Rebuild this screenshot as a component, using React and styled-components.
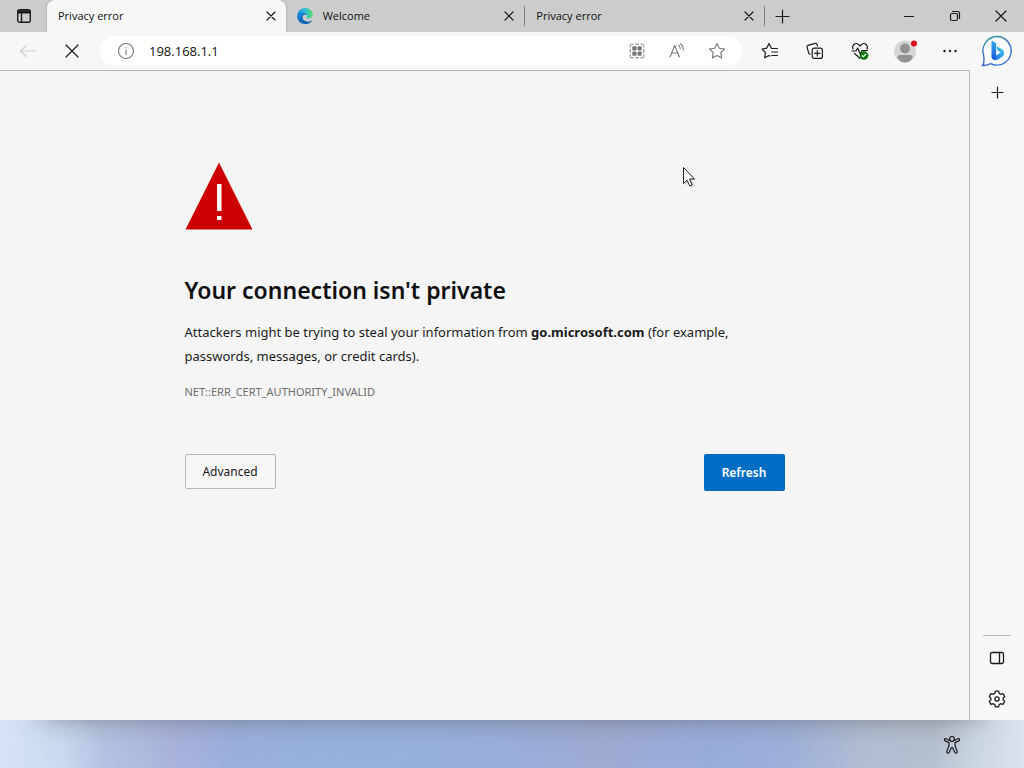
import React from 'react';
import styled, { createGlobalStyle } from 'styled-components';

const GlobalStyle = createGlobalStyle`
  * {
    box-sizing: border-box;
  }
  body {
    margin: 0;
    background: #f5f5f5;
    color: #101010;
    font-family: "Open Sans", "Noto Sans", sans-serif;
  }
  button, input {
    font-family: inherit;
    color: inherit;
  }
`;

const Desktop = styled.div`
  min-height: 100vh;
  display: flex;
  flex-direction: column;
`;

const TabStrip = styled.header`
  display: flex;
  height: 32px;
  background: #cccccc;
`;

const IconButton = styled.button`
  display: flex;
  flex: none;
  align-items: center;
  justify-content: center;
  width: ${props => props.$width || 38}px;
  height: ${props => props.$height || 30}px;
  padding: 0;
  border: 0;
  background: transparent;
  color: ${props => props.$color || '#1b1b1b'};
`;

const Tabs = styled.div`
  display: flex;
  flex: 0 1 718px;
  min-width: 0;
`;

const Tab = styled.div`
  display: flex;
  flex: 1;
  min-width: 0;
  align-items: center;
  height: 32px;
  padding-left: 11px;
  border-radius: ${props => (props.$active ? '8px 8px 0 0' : '0')};
  background: ${props => (props.$active ? '#f7f7f7' : 'transparent')};
  box-shadow: ${props => (props.$active ? '0 0 3px #a0a0a0' : 'none')};
`;

const TabDivider = styled.span`
  flex: none;
  width: 1px;
  height: 20px;
  margin-top: 6px;
  background: #808080;
`;

const TabTitle = styled.button`
  display: flex;
  flex: 1;
  align-items: center;
  gap: 10px;
  min-width: 0;
  height: 32px;
  padding: 0;
  border: 0;
  background: transparent;
  font-size: 11px;
  line-height: 16px;
  text-align: left;
  white-space: nowrap;
`;

const WindowControls = styled.div`
  display: flex;
  margin-left: auto;
`;

const Browser = styled.div`
  position: relative;
  z-index: 1;
  display: flex;
  flex: 1;
  box-shadow: 0 38px 28px -42px rgba(90, 90, 90, 0.7);
`;

const MainColumn = styled.div`
  display: flex;
  flex: 1;
  flex-direction: column;
  min-width: 0;
`;

const Toolbar = styled.div`
  display: flex;
  align-items: center;
  height: 39px;
  padding: 0 1px 0 6px;
  border-bottom: 1px solid #b8b8b8;
  background: #f7f7f7;
`;

const AddressBar = styled.form`
  display: flex;
  flex: 1;
  align-items: center;
  min-width: 0;
  height: 30px;
  margin: 0 9px 0 12px;
  padding: 0 5px 0 7px;
  border-radius: 15px;
  background: #ffffff;
`;

const AddressInput = styled.input`
  flex: 1;
  min-width: 0;
  height: 24px;
  padding: 0 4px;
  border: 0;
  outline: 0;
  background: transparent;
  font-size: 13px;
`;

const ToolbarActions = styled.div`
  display: flex;
  gap: 7px;
`;

const NavActions = styled.div`
  display: flex;
  gap: 6px;
`;

const Page = styled.main`
  flex: 1;
  padding: 91px 24px 24px;
  border-right: 1px solid #b8b8b8;
  background: #f5f5f5;
  font-family: "Noto Sans", "Open Sans", sans-serif;
`;

const ErrorContent = styled.div`
  max-width: 600px;
  margin: 0 auto;
`;

const WarningIcon = styled.svg`
  display: block;
  width: 68px;
  height: 68px;
`;

const Heading = styled.h1`
  margin: 44px 0 14px;
  font-size: 23px;
  font-weight: 600;
  line-height: 32px;
`;

const Message = styled.p`
  margin: 0;
  font-size: 13px;
  line-height: 24px;
  color: #1b1b1b;
`;

const ErrorCode = styled.div`
  margin-top: 12px;
  font-size: 11px;
  line-height: 24px;
  color: #6e6e6e;
`;

const ButtonRow = styled.div`
  display: flex;
  align-items: flex-start;
  justify-content: space-between;
  margin-top: 50px;
`;

const PageButton = styled.button`
  height: ${props => (props.$primary ? 37 : 35)}px;
  width: ${props => (props.$primary ? 81 : 91)}px;
  padding: 0;
  border: ${props => (props.$primary ? '0' : '1px solid #b8b8b8')};
  border-radius: 2px;
  background: ${props => (props.$primary ? '#006cc4' : '#f7f7f7')};
  color: ${props => (props.$primary ? '#ffffff' : '#1b1b1b')};
  font-size: 12px;
  font-weight: ${props => (props.$primary ? 600 : 400)};
`;

const Sidebar = styled.aside`
  display: flex;
  flex: none;
  flex-direction: column;
  align-items: center;
  width: 54px;
  padding: 2px 0 1px;
  background: #f7f7f7;
`;

const SidebarBottom = styled.div`
  display: flex;
  flex-direction: column;
  align-items: center;
  margin-top: auto;
  padding-top: 2px;
  border-top: 1px solid #b8b8b8;
`;

const Taskbar = styled.footer`
  display: flex;
  align-items: center;
  justify-content: flex-end;
  height: 48px;
  padding: 2px 53px 0 0;
  background: linear-gradient(
    90deg,
    #d6e3f3 0%,
    #cbdaf1 6%,
    #b5c4e1 10%,
    #a9b3dc 17%,
    #9bb0dd 23%,
    #98b2df 33%,
    #99afdc 48%,
    #9eabd2 59%,
    #98acdc 69%,
    #9eb1da 77%,
    #b4bed1 85%,
    #b6bfce 91%,
    #cbd5e1 95%,
    #dae3ee 100%
  );
`;

const TaskbarButton = styled(IconButton)`
  position: relative;
  z-index: 2;
`;

const MousePointer = styled.svg`
  position: fixed;
  z-index: 3;
  top: 166px;
  left: 682px;
  width: 15px;
  height: 23px;
  pointer-events: none;
`;

const Icon = ({ size = 16, stroke = 1, children }) => (
  <svg
    width={size}
    height={size}
    viewBox={`0 0 ${size} ${size}`}
    fill="none"
    stroke="currentColor"
    strokeWidth={stroke}
    strokeLinecap="round"
    strokeLinejoin="round"
    aria-hidden="true"
  >
    {children}
  </svg>
);

const CloseIcon = ({ size = 10 }) => (
  <Icon size={size} stroke={1.2}>
    <path d={`M1 1L${size - 1} ${size - 1}M${size - 1} 1L1 ${size - 1}`} />
  </Icon>
);

const PlusIcon = ({ size = 15 }) => (
  <Icon size={size} stroke={1.2}>
    <path d={`M${size / 2} 1V${size - 1}M1 ${size / 2}H${size - 1}`} />
  </Icon>
);

const TabActionsIcon = () => (
  <Icon stroke={1.4}>
    <rect x="1.7" y="1.7" width="12.6" height="12.6" rx="2" />
    <path d="M2 3.2H14M2 4.7H14" stroke="currentColor" strokeWidth="1.8" />
    <path d="M5.5 5V14" />
  </Icon>
);

const EdgeLogo = () => (
  <svg width="16" height="16" viewBox="0 0 16 16" aria-hidden="true">
    <defs>
      <linearGradient id="edgeTop" x1="0" y1="0.4" x2="1" y2="0.4">
        <stop offset="0" stopColor="#1c8fdc" />
        <stop offset="0.5" stopColor="#2cbfd2" />
        <stop offset="1" stopColor="#5fdb70" />
      </linearGradient>
      <linearGradient id="edgeBase" x1="0" y1="0" x2="1" y2="1">
        <stop offset="0" stopColor="#1a8fe0" />
        <stop offset="1" stopColor="#0c4f9c" />
      </linearGradient>
    </defs>
    <path d="M0.2 7.4C0.8 3 4 0.1 8.2 0.1c4.5 0 7.7 3.1 7.7 6.5 0 2.5-1.8 4-4.2 4-2 0-2.6-.7-2.2-1.4.8-1.4.4-4.7-3.5-4.7-3 0-5 1.3-5.8 2.9Z" fill="url(#edgeTop)" />
    <path d="M0.1 8c.3-2.4 3-4 5.7-3.8 2.8.2 4 1.9 4.1 3.1-.7-.8-3.8-.7-4.5 1.7-.7 3 2.7 5.4 5.9 4.9 1.4-.2 2.4-.7 3.1-1.1.3-.1.5.1.3.4A8 8 0 0 1 8 16C3.5 16 .1 12.6.1 8Z" fill="url(#edgeBase)" />
    <path d="M5.3 8.1c-1.7 3.1.4 6.8 4.1 7.6 2.3-.3 4.2-1.3 5.3-2.7-3.5 1.7-9.9.4-9.4-4.9Z" fill="#1267b5" />
  </svg>
);

const StarIcon = () => (
  <Icon size={18} stroke={1.1}>
    <path d="M9 1.5L11.3 6.2L16.5 7L12.8 10.7L13.6 15.9L9 13.5L4.4 15.9L5.2 10.7L1.5 7L6.7 6.2Z" />
  </Icon>
);

const QrIcon = () => (
  <Icon size={16}>
    <path d="M4 1.2H2.4Q1.2 1.2 1.2 2.4V4M12 1.2H13.6Q14.8 1.2 14.8 2.4V4M4 14.8H2.4Q1.2 14.8 1.2 13.6V12M12 14.8H13.6Q14.8 14.8 14.8 13.6V12M6.5 1.2H9.5M6.5 14.8H9.5M1.2 6.5V9.5M14.8 6.5V9.5" />
    <g fill="currentColor" stroke="none">
      <rect x="3.3" y="3.3" width="4.2" height="4.2" rx="1" />
      <rect x="8.5" y="3.3" width="4.2" height="4.2" rx="1" />
      <rect x="3.3" y="8.5" width="4.2" height="4.2" rx="1" />
      <rect x="8.5" y="8.5" width="4.2" height="4.2" rx="1" />
    </g>
  </Icon>
);

const ReadAloudIcon = () => (
  <Icon size={18} stroke={1.1}>
    <path d="M2 15L6.7 3.5L11.4 15M3.6 11H9.8M10.7 3.3Q12.3 4.7 12.2 6.7M12.5 1.8Q15.6 4.2 15.2 8" />
  </Icon>
);

const FavoritesIcon = () => (
  <Icon size={18} stroke={1.2}>
    <path d="M10.3 6L8 1.6L5.7 6.2L1 7L4.4 10.5L3.7 15.8L8 13.4L9 14M10.8 6.5H16.5M10.8 10H16.5M10.8 13.5H16.5" />
  </Icon>
);

const CollectionsIcon = () => (
  <Icon size={18} stroke={1.2}>
    <rect x="6.2" y="6.2" width="10.2" height="10.2" rx="2" />
    <path d="M11.3 8.6V14M8.6 11.3H14M4 12.1Q3 12 2.6 10.800L1.100 5Q.8 3.700 2 3.300L9.200 1.300Q10.500 1 11 2.300L11.500 4" />
  </Icon>
);

const EssentialsIcon = () => (
  <Icon size={18} stroke={1.2}>
    <path d="M2 7C.6 3.5 4-.1 7.4 2.4L9 4L10.6 2.4C14-.1 17.4 3.5 16 7M1 9H5L6.7 6L9.2 12L11 8.5H16.5M3.5 11.5L9 16.3" />
    <circle cx="13" cy="13.4" r="4" fill="#107c10" stroke="#0b6a0b" strokeWidth="0.6" />
    <path d="M11.4 13.7L12.5 14.7L14.8 12.2" stroke="#ffffff" />
  </Icon>
);

const ProfileIcon = () => (
  <svg width="24" height="24" viewBox="0 0 24 24" aria-hidden="true">
    <circle cx="12" cy="12.5" r="11" fill="#d6d6d6" />
    <circle cx="12" cy="9.5" r="5" fill="#929292" />
    <path d="M4.5 18.5Q4.5 16 7 16H17Q19.5 16 19.5 18.5Q17 23.5 12 23.5Q7 23.5 4.5 18.5Z" fill="#929292" />
    <circle cx="21" cy="4.5" r="3" fill="#e00b1c" />
  </svg>
);

const BingIcon = () => (
  <svg width="32" height="32" viewBox="0 0 32 32" aria-hidden="true">
    <defs>
      <linearGradient id="bingBubble" x1="0.2" y1="0" x2="0.8" y2="1">
        <stop offset="0" stopColor="#2a9a9c" />
        <stop offset="0.5" stopColor="#3b64bd" />
        <stop offset="1" stopColor="#3378e8" />
      </linearGradient>
      <linearGradient id="bingBar" x1="0" y1="0" x2="0" y2="1">
        <stop offset="0" stopColor="#32a8f0" />
        <stop offset="1" stopColor="#1559d8" />
      </linearGradient>
      <linearGradient id="bingBowl" x1="1" y1="0" x2="0" y2="1">
        <stop offset="0" stopColor="#42d2ee" />
        <stop offset="1" stopColor="#1a66e8" />
      </linearGradient>
    </defs>
    <path d="M16.5 1.5A14.3 14.3 0 1 1 9.5 28.6Q5.5 30.7 1.6 30.5Q3.600 28 2.7 20.5A14.3 14.3 0 0 1 16.5 1.5Z" fill="#fbfdff" stroke="url(#bingBubble)" strokeWidth="1.4" />
    <path d="M16.2 11.600Q15.300 11.600 15.800 12.900L17 15.900L20 17.300L12.400 22.200Q11.800 24.900 14.700 25.100Q16 25 17.200 24.200L21.600 21.500Q23.400 20 23.200 17.600Q22.900 15.100 20.700 13.900Z" fill="url(#bingBowl)" />
    <path d="M10.500 6.500Q10.500 5.600 11.400 6L14.300 7.700Q15.200 8.300 15.200 9.500V20.200L14.400 24.800Q10.500 24.900 10.500 21.700Z" fill="url(#bingBar)" />
  </svg>
);

const SidePanelIcon = () => (
  <Icon stroke={1.3}>
    <rect x="1.5" y="2.5" width="13" height="11" rx="1.8" />
    <path d="M10.5 2.5V13.5" />
  </Icon>
);

const SettingsIcon = () => (
  <Icon size={18} stroke={1.3}>
    <path d="M7.4 1.2H10.6L11.2 3.4L12.8 4.3L15 3.7L16.7 6.5L15.1 8.1V9.9L16.7 11.5L15 14.3L12.8 13.7L11.2 14.6L10.6 16.8H7.4L6.8 14.6L5.2 13.7L3 14.3L1.3 11.5L2.9 9.9V8.1L1.3 6.5L3 3.7L5.2 4.3L6.8 3.4Z" />
    <circle cx="9" cy="9" r="2.1" />
  </Icon>
);

const AccessibilityIcon = () => (
  <Icon size={20} stroke={1.2}>
    <circle cx="10" cy="3.9" r="2.4" />
    <path d="M7.8 5.5L4 3.7Q2.6 3.4 2.4 4.6Q2.3 5.5 3.2 5.9L7 7.6V10.5L4.8 16.6Q4.7 18 5.8 18.2Q6.8 18.3 7.1 17.4L9.5 12.5H10.5L12.9 17.4Q13.2 18.3 14.2 18.2Q15.3 18 15.2 16.6L13 10.5V7.6L16.8 5.9Q17.7 5.5 17.6 4.6Q17.4 3.4 16 3.7L12.2 5.5" />
  </Icon>
);

const BrowserTab = ({ title, icon, active }) => (
  <Tab $active={active}>
    <TabTitle type="button" aria-current={active ? 'page' : undefined}>
      {icon}
      {title}
    </TabTitle>
    <IconButton $width={30} type="button" aria-label={`Close ${title}`}>
      <CloseIcon />
    </IconButton>
  </Tab>
);

const TitleBar = () => (
  <TabStrip>
    <IconButton $width={47} $height={32} type="button" aria-label="Tab actions">
      <TabActionsIcon />
    </IconButton>
    <Tabs>
      <BrowserTab title="Privacy error" active />
      <BrowserTab title="Welcome" icon={<EdgeLogo />} />
      <TabDivider />
      <BrowserTab title="Privacy error" />
      <TabDivider />
    </Tabs>
    <IconButton $width={35} $height={32} type="button" aria-label="New tab">
      <PlusIcon />
    </IconButton>
    <WindowControls>
      <IconButton $width={46} $height={32} type="button" aria-label="Minimize">
        <Icon size={10} stroke={1.2}>
          <path d="M0 5.5H10" />
        </Icon>
      </IconButton>
      <IconButton $width={46} $height={32} type="button" aria-label="Restore">
        <Icon size={12} stroke={1.2}>
          <rect x="1.5" y="3.5" width="7" height="7" rx="1.5" />
          <path d="M3.5 1.5H8.5Q10.5 1.5 10.5 3.5V8.5" />
        </Icon>
      </IconButton>
      <IconButton $width={46} $height={32} type="button" aria-label="Close window">
        <CloseIcon size={12} />
      </IconButton>
    </WindowControls>
  </TabStrip>
);

const NavigationBar = () => (
  <Toolbar>
    <NavActions>
      <IconButton $width={44} $color="#cfcfcf" type="button" aria-label="Back" disabled>
        <Icon size={18} stroke={1.2}>
          <path d="M16.5 9H1.5M7 3.5L1.5 9L7 14.5" />
        </Icon>
      </IconButton>
      <IconButton $width={32} type="button" aria-label="Stop">
        <CloseIcon size={14} />
      </IconButton>
    </NavActions>
    <AddressBar>
      <IconButton $color="#767676" type="button" aria-label="View site information">
        <Icon size={18} stroke={1.1}>
          <circle cx="9" cy="9" r="7.5" />
          <path d="M9 8V12.5M9 5.6V5.8" />
        </Icon>
      </IconButton>
      <AddressInput aria-label="Address" defaultValue="198.168.1.1" />
      <IconButton $width={40} $color="#767676" type="button" aria-label="Open app scan">
        <QrIcon />
      </IconButton>
      <IconButton $width={40} $color="#767676" type="button" aria-label="Read aloud">
        <ReadAloudIcon />
      </IconButton>
      <IconButton $width={40} $color="#767676" type="button" aria-label="Add to favorites">
        <StarIcon />
      </IconButton>
    </AddressBar>
    <ToolbarActions>
      <IconButton type="button" aria-label="Favorites">
        <FavoritesIcon />
      </IconButton>
      <IconButton type="button" aria-label="Collections">
        <CollectionsIcon />
      </IconButton>
      <IconButton type="button" aria-label="Browser essentials">
        <EssentialsIcon />
      </IconButton>
      <IconButton type="button" aria-label="Profile">
        <ProfileIcon />
      </IconButton>
      <IconButton type="button" aria-label="More">
        <Icon>
          <g fill="currentColor" stroke="none">
            <circle cx="2.5" cy="8" r="1.2" />
            <circle cx="8" cy="8" r="1.2" />
            <circle cx="13.5" cy="8" r="1.2" />
          </g>
        </Icon>
      </IconButton>
    </ToolbarActions>
  </Toolbar>
);

const ErrorPage = () => (
  <Page>
    <ErrorContent>
      <WarningIcon viewBox="0 0 68 68" role="img" aria-label="Warning">
        <path d="M34 0.5L67.5 67.5H0.5Z" fill="#cc0000" />
        <path d="M32 22H36.500V49H32ZM32 54H36.500V58H32Z" fill="#ffffff" />
      </WarningIcon>
      <Heading>Your connection isn't private</Heading>
      <Message>
        Attackers might be trying to steal your information from <strong>go.microsoft.com</strong> (for
        example, passwords, messages, or credit cards).
      </Message>
      <ErrorCode>NET::ERR_CERT_AUTHORITY_INVALID</ErrorCode>
      <ButtonRow>
        <PageButton type="button">Advanced</PageButton>
        <PageButton $primary type="button">Refresh</PageButton>
      </ButtonRow>
    </ErrorContent>
  </Page>
);

const App = () => (
  <Desktop>
    <GlobalStyle />
    <TitleBar />
    <Browser>
      <MainColumn>
        <NavigationBar />
        <ErrorPage />
      </MainColumn>
      <Sidebar>
        <IconButton $height={34} type="button" aria-label="Discover">
          <BingIcon />
        </IconButton>
        <IconButton $height={48} type="button" aria-label="Customize sidebar">
          <PlusIcon size={13} />
        </IconButton>
        <SidebarBottom>
          <IconButton $width={28} $height={40} type="button" aria-label="Hide sidebar">
            <SidePanelIcon />
          </IconButton>
          <IconButton $width={28} $height={41} type="button" aria-label="Settings">
            <SettingsIcon />
          </IconButton>
        </SidebarBottom>
      </Sidebar>
    </Browser>
    <Taskbar>
      <TaskbarButton type="button" aria-label="Accessibility">
        <AccessibilityIcon />
      </TaskbarButton>
    </Taskbar>
    <MousePointer viewBox="0 0 15 23" aria-hidden="true">
      <path d="M3 3V20L7 16L10 22L13 20L10 14H14Z" fill="#b8b8b8" opacity="0.5" />
      <path d="M1.5 1.5V17.5L5 14.2L7.8 20L10.2 19L7.5 13H12.5Z" fill="#ffffff" stroke="#202020" />
    </MousePointer>
  </Desktop>
);

export default App;
